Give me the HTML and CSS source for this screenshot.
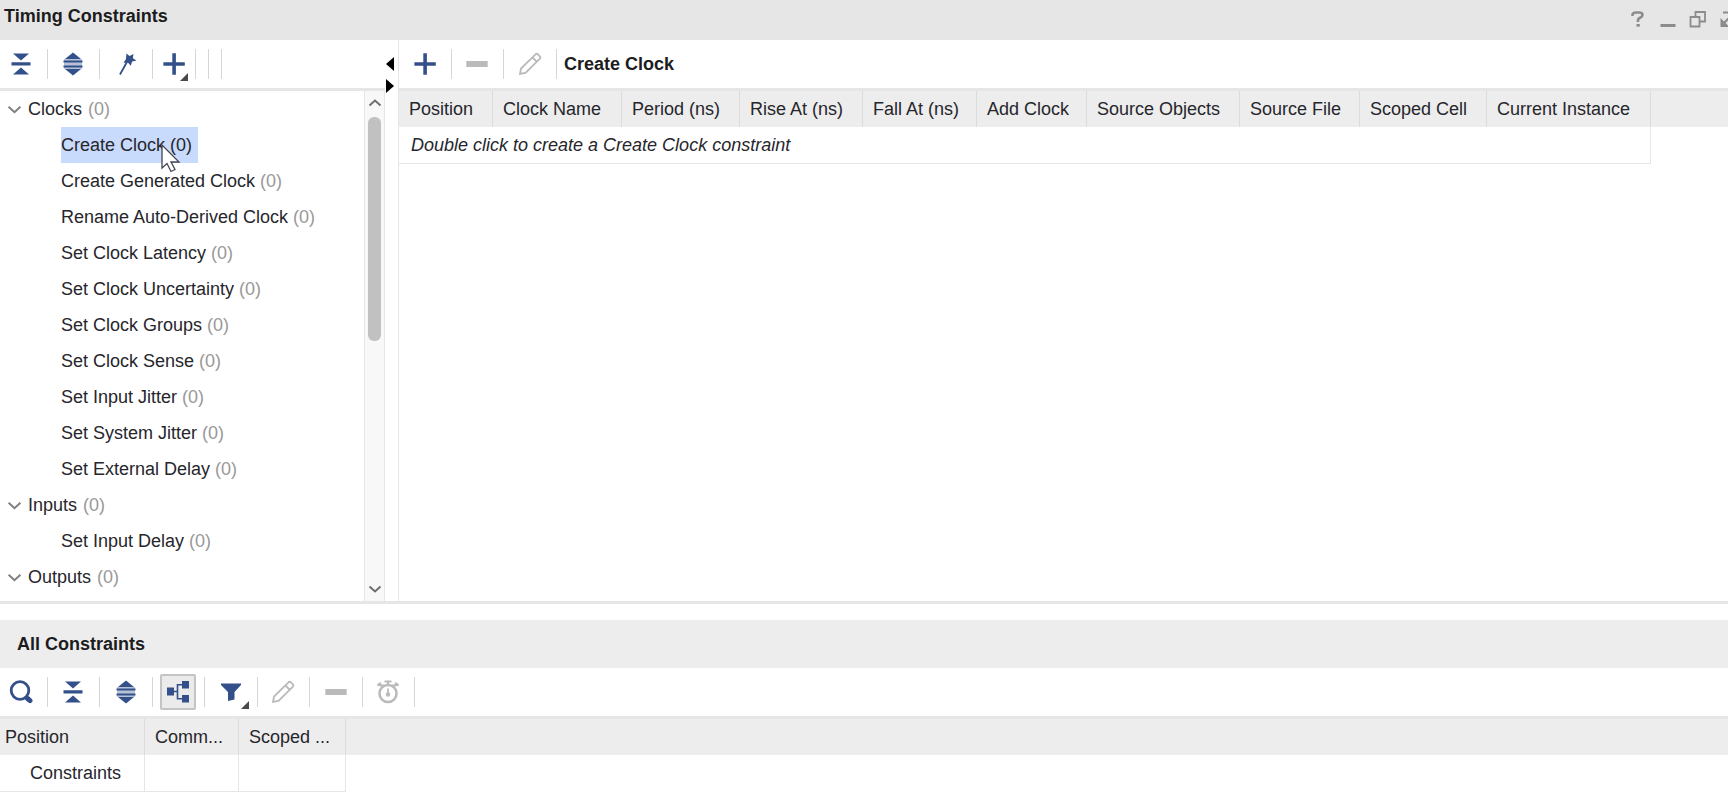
FILE: index.html
```html
<!DOCTYPE html>
<html lang="en">
<head>
<meta charset="utf-8">
<title>Timing Constraints</title>
<link rel="stylesheet" href="styles.css">
</head>
<body>
<svg class="sprite" aria-hidden="true">
  <symbol id="collapse" viewBox="0 0 24 24"><path d="M4 1.500h16l-8 7zM2.500 10.200h19v3.300h-19zM4 22.500h16l-8-7z"/></symbol>
  <symbol id="expand" viewBox="0 0 24 24"><path d="M12 .5l8 6.500H4zM12 23.500l8-6.500H4z"/><path d="M3 7h18v10H3z" opacity=".35"/><path d="M2.500 8.500h19v2h-19zM2.500 13.500h19v2h-19z"/></symbol>
  <symbol id="wand" viewBox="0 0 24 24"><path d="M12.500 1.500l3 2.500 4-2-.7 4.200L22.500 8.500l-4.400 1-1.300 4.300-2.900-3.300-4.500.3 2.500-3.600z"/><path d="M13.500 9L6 22.500" fill="none" stroke="currentColor" stroke-width="1.800"/></symbol>
  <symbol id="plus" viewBox="0 0 24 24"><path d="M10.300 1.300h3.600v9h8.900v3.500h-8.900v9h-3.600v-9H1.400v-3.500h8.900z"/></symbol>
  <symbol id="minus" viewBox="0 0 24 24"><path d="M1.300 9h21.400v6H1.300z"/></symbol>
  <symbol id="pencil" viewBox="0 0 24 24"><path d="M2 22l1-5.500L17.500 2.300q1.200-1 2.400 0l2 2q1 1.200 0 2.400L7.500 21zM14.500 5.500l4.500 4.500" fill="none" stroke="currentColor" stroke-width="1.800"/></symbol>
  <symbol id="search" viewBox="0 0 24 24"><circle cx="11" cy="10.500" r="8.800" fill="none" stroke="currentColor" stroke-width="2.800"/><path d="M18.500 18.500l2.500 2.200" stroke="currentColor" stroke-width="5" stroke-linecap="round"/></symbol>
  <symbol id="hierarchy" viewBox="0 0 24 24"><path d="M1 7.500h7v8H1zM16 1h7v7.500h-7zM16 15h7v7.500h-7z"/><path d="M8 11.500h3M17 4.800h-5.500v14H17" fill="none" stroke="currentColor" stroke-width="1.600"/></symbol>
  <symbol id="filter" viewBox="0 0 24 24"><path d="M2 3.500h20V5l-6.500 7v7.500L9 21v-9L2 5z"/></symbol>
  <symbol id="timer" viewBox="0 0 24 24"><path d="M8.500 1.500h7M12 1.500V5M1.500 5.500L5 3M22.500 5.500L19 3M4 5.500h4M16 5.500h4" fill="none" stroke="currentColor" stroke-width="2.200"/><circle cx="12" cy="13.500" r="8.500" fill="none" stroke="currentColor" stroke-width="2.500"/><path d="M12 8.500v5" stroke="currentColor" stroke-width="1.800"/><circle cx="12" cy="14.500" r="2.200"/></symbol>
  <symbol id="chevron" viewBox="0 0 14 14"><path d="M1.500 4.500L7 9.500l5.500-5" fill="none" stroke="currentColor" stroke-width="1.900"/></symbol>
  <symbol id="help" viewBox="0 0 18 18"><path d="M3.500 6V4.500Q4 2.500 7 2.500h3q3.500 0 3.500 2.500 0 1.500-2 2.500-2.500 1-2.500 3V12" fill="none" stroke="currentColor" stroke-width="2.600"/><path d="M7.500 14h3.300v2.700H7.500z"/></symbol>
  <symbol id="minimize" viewBox="0 0 18 18"><path d="M1.500 14h15v3h-15z"/></symbol>
  <symbol id="restore" viewBox="0 0 18 18"><path d="M1.500 7h9v9.500h-9zM6.500 7V2h9.500v9.500h-5.500" fill="none" stroke="currentColor" stroke-width="1.800"/></symbol>
  <symbol id="maximize" viewBox="0 0 18 18"><path d="M4 2.500h11.500V14M3 15L15 3" fill="none" stroke="currentColor" stroke-width="2.200"/><path d="M1.500 8v9h9z"/></symbol>
</svg>

<header class="titlebar">
  <h1 class="heading">Timing Constraints</h1>
  <div class="window-controls">
    <button class="window-btn" aria-label="Help"><svg><use href="#help"/></svg></button>
    <button class="window-btn" aria-label="Minimize"><svg><use href="#minimize"/></svg></button>
    <button class="window-btn" aria-label="Restore"><svg><use href="#restore"/></svg></button>
    <button class="window-btn" aria-label="Maximize"><svg><use href="#maximize"/></svg></button>
  </div>
</header>

<main class="workspace">
  <section class="sidebar">
    <div class="toolbar">
      <div class="tools tools-three tools-flush">
        <div class="tool"><button aria-label="Collapse all"><svg><use href="#collapse"/></svg></button></div>
        <div class="tool"><button aria-label="Expand all"><svg><use href="#expand"/></svg></button></div>
        <div class="tool"><button aria-label="Wizard"><svg><use href="#wand"/></svg></button></div>
      </div>
      <div class="tool tool-narrow"><button class="has-menu" aria-label="Add constraint"><svg><use href="#plus"/></svg></button></div>
      <div class="tool tool-empty"></div>
      <div class="tool tool-empty"></div>
    </div>
    <div class="tree-pane">
      <ul class="tree">
        <li><button class="group"><svg><use href="#chevron"/></svg>Clocks <span class="count">(0)</span></button>
          <ul class="branch">
            <li><button class="leaf selected">Create Clock <span class="count">(0)</span>
              <svg class="pointer" viewBox="0 0 20 30"><path d="M1 1v23l5-4.500 4 8 4-2-4-7.500h8z" fill="#fff" stroke="#445" stroke-width="1.300"/></svg></button></li>
            <li><button class="leaf">Create Generated Clock <span class="count">(0)</span></button></li>
            <li><button class="leaf">Rename Auto-Derived Clock <span class="count">(0)</span></button></li>
            <li><button class="leaf">Set Clock Latency <span class="count">(0)</span></button></li>
            <li><button class="leaf">Set Clock Uncertainty <span class="count">(0)</span></button></li>
            <li><button class="leaf">Set Clock Groups <span class="count">(0)</span></button></li>
            <li><button class="leaf">Set Clock Sense <span class="count">(0)</span></button></li>
            <li><button class="leaf">Set Input Jitter <span class="count">(0)</span></button></li>
            <li><button class="leaf">Set System Jitter <span class="count">(0)</span></button></li>
            <li><button class="leaf">Set External Delay <span class="count">(0)</span></button></li>
          </ul>
        </li>
        <li><button class="group"><svg><use href="#chevron"/></svg>Inputs <span class="count">(0)</span></button>
          <ul class="branch">
            <li><button class="leaf">Set Input Delay <span class="count">(0)</span></button></li>
          </ul>
        </li>
        <li><button class="group"><svg><use href="#chevron"/></svg>Outputs <span class="count">(0)</span></button></li>
      </ul>
      <div class="scrollbar">
        <button class="scroll-btn scroll-up" aria-label="Scroll up"><svg><use href="#chevron"/></svg></button>
        <div class="track"><div class="thumb"></div></div>
        <button class="scroll-btn" aria-label="Scroll down"><svg><use href="#chevron"/></svg></button>
      </div>
    </div>
  </section>

  <div class="splitter">
    <button aria-label="Collapse left"><svg viewBox="0 0 10 14"><path d="M9 0v14L1 7z"/></svg></button>
    <button aria-label="Collapse right"><svg viewBox="0 0 10 14"><path d="M1 0v14l8-7z"/></svg></button>
  </div>

  <section class="detail">
    <div class="toolbar">
      <div class="tools tools-three">
        <div class="tool"><button aria-label="Add"><svg><use href="#plus"/></svg></button></div>
        <div class="tool"><button disabled aria-label="Remove"><svg><use href="#minus"/></svg></button></div>
        <div class="tool"><button disabled aria-label="Edit"><svg><use href="#pencil"/></svg></button></div>
      </div>
      <h2 class="heading">Create Clock</h2>
    </div>
    <table class="grid">
      <colgroup><col class="c-position"><col class="c-name"><col class="c-period"><col class="c-rise"><col class="c-fall"><col class="c-add"><col class="c-objects"><col class="c-file"><col class="c-cell"><col class="c-instance"><col></colgroup>
      <thead><tr><th>Position</th><th>Clock Name</th><th>Period (ns)</th><th>Rise At (ns)</th><th>Fall At (ns)</th><th>Add Clock</th><th>Source Objects</th><th>Source File</th><th>Scoped Cell</th><th>Current Instance</th><th class="filler"></th></tr></thead>
      <tbody><tr><td colspan="10" class="hint">Double click to create a Create Clock constraint</td><td class="filler"></td></tr></tbody>
    </table>
  </section>
</main>

<section class="all">
  <header class="all-header"><h2 class="heading">All Constraints</h2></header>
  <div class="toolbar">
    <div class="tools tools-eight tools-flush">
      <div class="tool"><button aria-label="Search"><svg><use href="#search"/></svg></button></div>
      <div class="tool"><button aria-label="Collapse all"><svg><use href="#collapse"/></svg></button></div>
      <div class="tool"><button aria-label="Expand all"><svg><use href="#expand"/></svg></button></div>
      <div class="tool"><button class="pressed" aria-pressed="true" aria-label="Group by"><svg><use href="#hierarchy"/></svg></button></div>
      <div class="tool"><button class="has-menu" aria-label="Filter"><svg><use href="#filter"/></svg></button></div>
      <div class="tool"><button disabled aria-label="Edit"><svg><use href="#pencil"/></svg></button></div>
      <div class="tool"><button disabled aria-label="Remove"><svg><use href="#minus"/></svg></button></div>
      <div class="tool"><button disabled aria-label="Report timing"><svg><use href="#timer"/></svg></button></div>
    </div>
  </div>
  <table class="grid grid-all">
    <colgroup><col class="a-position"><col class="a-command"><col class="a-scoped"><col></colgroup>
    <thead><tr><th>Position</th><th>Comm...</th><th>Scoped ...</th><th class="filler"></th></tr></thead>
    <tbody><tr><td>Constraints</td><td></td><td></td><td class="filler"></td></tr></tbody>
  </table>
</section>
</body>
</html>
```
FILE: styles.css
```css
* { box-sizing: border-box; }

body {
  margin: 0;
  min-height: 100vh;
  background: #fff;
  color: #26262c;
  font: 18px/36px "Liberation Sans", Arial, sans-serif;
  overflow-x: hidden;
}

.sprite { display: none; }
svg { display: block; fill: currentColor; }
ul { margin: 0; padding: 0; list-style: none; }

button {
  margin: 0;
  padding: 0;
  border: 0;
  background: none;
  color: inherit;
  font: inherit;
}

.heading {
  margin: 0;
  color: #1c1c20;
  font-size: 18px;
  font-weight: bold;
}

/* Title bar */
.titlebar {
  display: flex;
  justify-content: space-between;
  height: 40px;
  background: #e6e6e6;
  overflow: hidden;
}
.titlebar .heading { padding-left: 4px; line-height: 32px; }
.window-controls { display: flex; margin-right: -15px; }
.window-btn {
  display: grid;
  place-items: center;
  width: 30px;
  height: 38px;
  color: #8c8c8c;
}
.window-btn svg { width: 18px; height: 18px; }

/* Toolbars */
.toolbar {
  display: flex;
  align-items: center;
  height: 51px;
  border-bottom: 3px solid #e6e6e6;
}
.tools { display: grid; }
.tools-three { width: 158px; grid-template-columns: repeat(3, 1fr); }
.tools-eight { width: 420px; grid-template-columns: repeat(8, 1fr); }
.tools-flush { margin-left: -5px; }
.tool {
  display: flex;
  align-items: center;
  justify-content: center;
  height: 30px;
  border-right: 1px solid #d6d6d6;
}
.tool-narrow { width: 43px; }
.tool-empty { width: 13px; }
.tool button {
  display: grid;
  place-items: center;
  position: relative;
  flex: none;
  width: 36px;
  height: 36px;
  color: #34508a;
}
.tool button:disabled { color: #bababa; }
.tool svg { width: 24px; height: 24px; }
.tool .pressed { border: 2px solid #c4c4c4; border-radius: 2px; background: #ebebeb; }
.has-menu::after {
  content: "";
  position: absolute;
  right: 0;
  bottom: 1px;
  border-left: 8px solid transparent;
  border-bottom: 8px solid #4a4a4a;
}
.tool-narrow .has-menu::after { right: 4px; }
.toolbar > .heading { padding-left: 7px; }

/* Upper panes */
.workspace { display: flex; border-bottom: 3px solid #e6e6e6; }
.sidebar { display: flex; flex-direction: column; flex: none; width: 385px; }
.tree-pane { display: flex; flex: 1; }
.tree { flex: 1; padding-bottom: 6px; }
.group { display: flex; align-items: center; gap: 6px; padding-left: 7px; }
.group svg { width: 15px; height: 15px; color: #808080; }
.branch { padding-left: 61px; }
.leaf { display: block; position: relative; height: 36px; white-space: nowrap; }
.count { color: #999; }
.selected { padding-right: 6px; background: #c9dbfc; }
.selected .count { color: #26262c; }
.pointer { position: absolute; left: 100px; top: 17px; width: 20px; height: 30px; }

.scrollbar {
  display: flex;
  flex-direction: column;
  width: 21px;
  border: solid #e6e6e6;
  border-width: 0 1px;
  background: #f8f8f8;
}
.scroll-btn { display: grid; place-items: center; height: 24px; color: #6c6c6c; }
.scroll-btn svg { width: 14px; height: 14px; }
.scroll-up svg { transform: rotate(180deg); }
.track { flex: 1; padding: 2px 3px; }
.thumb { height: 49%; border-radius: 6px; background: #c1c1c1; }

.splitter {
  display: flex;
  flex-direction: column;
  gap: 8px;
  flex: none;
  width: 14px;
  padding-top: 17px;
  border-right: 1px solid #e6e6e6;
  color: #000;
}
.splitter svg { width: 10px; height: 14px; }

.detail { flex: 1; min-width: 0; }

/* Tables */
.grid {
  width: 100%;
  table-layout: fixed;
  border-collapse: separate;
  border-spacing: 0;
}
.grid th, .grid td {
  height: 36px;
  padding: 0 0 0 10px;
  text-align: left;
  font-weight: normal;
  white-space: nowrap;
}
.grid th { border-right: 1px solid #dcdcdc; background: #ededed; }
.grid td { height: 37px; border-right: 1px solid #e6e6e6; border-bottom: 1px solid #e6e6e6; }
.grid .filler { padding: 0; border: 0; }
.grid .hint { padding-left: 12px; font-style: italic; }
.c-position { width: 94px; }
.c-name { width: 129px; }
.c-period { width: 118px; }
.c-rise { width: 123px; }
.c-fall { width: 114px; }
.c-add { width: 110px; }
.c-objects { width: 153px; }
.c-file { width: 120px; }
.c-cell { width: 127px; }
.c-instance { width: 164px; }

/* Lower pane */
.all { padding-top: 16px; }
.all-header { padding: 6px 17px; background: #ededed; }
.a-position { width: 145px; }
.a-command { width: 94px; }
.a-scoped { width: 107px; }
.grid-all th:first-child { padding-left: 5px; }
.grid-all td:first-child { padding-left: 30px; }
```
